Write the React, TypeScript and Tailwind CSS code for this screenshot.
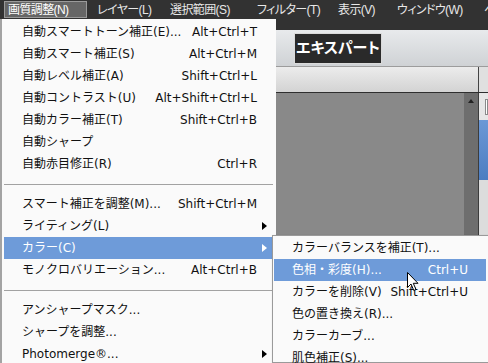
import clsx from "clsx";

type Entry =
  | { sep: true }
  | { label: string; shortcut?: string; arrow?: boolean; active?: boolean };

const mainMenu: Entry[] = [
  { label: "自動スマートトーン補正(E)...", shortcut: "Alt+Ctrl+T" },
  { label: "自動スマート補正(S)", shortcut: "Alt+Ctrl+M" },
  { label: "自動レベル補正(A)", shortcut: "Shift+Ctrl+L" },
  { label: "自動コントラスト(U)", shortcut: "Alt+Shift+Ctrl+L" },
  { label: "自動カラー補正(T)", shortcut: "Shift+Ctrl+B" },
  { label: "自動シャープ" },
  { label: "自動赤目修正(R)", shortcut: "Ctrl+R" },
  { sep: true },
  { label: "スマート補正を調整(M)...", shortcut: "Shift+Ctrl+M" },
  { label: "ライティング(L)", arrow: true },
  { label: "カラー(C)", arrow: true, active: true },
  { label: "モノクロバリエーション...", shortcut: "Alt+Ctrl+B" },
  { sep: true },
  { label: "アンシャープマスク..." },
  { label: "シャープを調整..." },
  { label: "Photomerge®...", arrow: true },
];

const colorMenu: Entry[] = [
  { label: "カラーバランスを補正(T)..." },
  { label: "色相・彩度(H)...", shortcut: "Ctrl+U", active: true },
  { label: "カラーを削除(V)", shortcut: "Shift+Ctrl+U" },
  { label: "色の置き換え(R)..." },
  { label: "カラーカーブ..." },
  { label: "肌色補正(S)..." },
];

const menuBar = [
  { label: "画質調整(N)", w: "w-[89px]", open: true },
  { label: "レイヤー(L)", w: "w-[73px]" },
  { label: "選択範囲(S)", w: "w-[87px]" },
  { label: "フィルター(T)", w: "w-[81px]" },
  { label: "表示(V)", w: "w-[59px]" },
  { label: "ウィンドウ(W)", w: "w-[87px]" },
  { label: "ヘルプ(H)", w: "w-[80px]" },
];

function MenuRows({ items, padR }: { items: Entry[]; padR: string }) {
  return (
    <>
      {items.map((it, i) =>
        "sep" in it ? (
          <div key={i} className="flex h-[18px] items-center pr-px">
            <div className="h-px w-full bg-[#a2a2a2]" />
          </div>
        ) : (
          <div
            key={i}
            className={clsx(
              "relative flex h-[22px] items-center whitespace-nowrap pl-[18px]",
              padR,
              it.active ? "bg-[#6e9bd9] text-white" : "text-[#111]"
            )}
          >
            <span className="flex-1">{it.label}</span>
            {it.shortcut && <span>{it.shortcut}</span>}
            {it.arrow && (
              <span
                className={clsx(
                  "absolute right-[7px] top-[7px] h-0 w-0 border-y-[4px] border-l-[5px] border-y-transparent",
                  it.active ? "border-l-white" : "border-l-black"
                )}
              />
            )}
          </div>
        )
      )}
    </>
  );
}

export default function App() {
  return (
    <div className="relative flex h-[363px] w-[488px] flex-col overflow-hidden bg-[#898989] font-['DejaVu_Sans','Noto_Sans_CJK_JP',sans-serif] text-[12px] leading-none">
      {/* menu bar */}
      <header className="h-[30px] shrink-0 bg-[#323232]">
        <nav className="flex h-[19px] items-center overflow-hidden pl-1 font-['Liberation_Sans','Noto_Sans_CJK_JP',sans-serif] text-[12px] tracking-[-0.6px] text-[#e8e8e8] [font-feature-settings:'palt']">
          {menuBar.map((m) => (
            <div key={m.label} className={clsx("flex h-[18px] shrink-0 items-center", m.w)}>
              <span
                className={clsx(
                  "flex h-[17px] items-center whitespace-nowrap px-1",
                  m.open && "w-[83px] border border-[#9a9a9a] bg-[#666] px-[3px] text-white"
                )}
              >
                {m.label}
              </span>
            </div>
          ))}
        </nav>
      </header>

      {/* toolbar */}
      <div className="flex h-[37px] shrink-0 items-center border-b border-[#9c9c9c] bg-gradient-to-b from-[#e8eaec] to-[#cfd2d5] pl-[294px]">
        <div className="flex h-[31px] w-[88px] items-center justify-center border border-[#dadada] bg-[#2a2a2a] text-[15px] font-bold text-white [font-feature-settings:'palt']">
          エキスパート
        </div>
      </div>

      {/* panel header */}
      <div className="flex h-[26px] shrink-0 border-b border-[#2e2e2e]">
        <div className="flex-1 bg-gradient-to-b from-[#ececec] to-[#d3d3d3]" />
        <div className="w-[10px] border-l border-[#444] bg-[#e0e0e0]" />
      </div>

      {/* work area */}
      <div className="flex flex-1">
        <div className="flex-1 bg-[#898989]" />
        <div className="flex w-[14px] justify-center bg-[#6e6e6e] pt-[6px]">
          <span className="h-0 w-0 border-x-[3px] border-b-[4px] border-x-transparent border-b-[#222]" />
        </div>
        <div className="flex w-[10px] flex-col border-l border-[#3c3c3c]">
          <div className="flex h-[27px] items-center bg-[#e6e6e6] pl-[6px]">
            <div className="h-[16px] w-full border border-[#8a8a8a] bg-white" />
          </div>
          <div className="h-[60px] bg-gradient-to-b from-[#6b98d6] to-[#4c7dc1]" />
          <div className="flex-1 bg-[#dcdcdc]" />
        </div>
      </div>

      {/* open dropdown */}
      <div className="absolute bottom-0 left-0 top-[19px] w-[276px] border-l-2 border-[#a3a3a3] bg-[#fafafa] px-[2px] pt-[2px]">
        <MenuRows items={mainMenu} padR="pr-[17px]" />
      </div>

      {/* color submenu */}
      <div className="absolute bottom-0 left-[272px] top-[235px] w-[216px] border border-r-0 border-[#9a9a9a] bg-[#fafafa] pl-px pr-[2px] pt-px shadow-[1px_1px_2px_rgba(0,0,0,0.3)]">
        <MenuRows items={colorMenu} padR="pr-[18px]" />
      </div>

      {/* mouse pointer */}
      <svg className="absolute left-[407px] top-[272px]" width="13" height="20" viewBox="0 0 13 20">
        <path d="M0.5 0.5 L0.5 15.5 L4 12 L6.8 18.5 L9 17.5 L6.3 11.3 L11 11.3 Z" fill="#fff" stroke="#000" strokeWidth="1" strokeLinejoin="round" />
      </svg>
    </div>
  );
}
